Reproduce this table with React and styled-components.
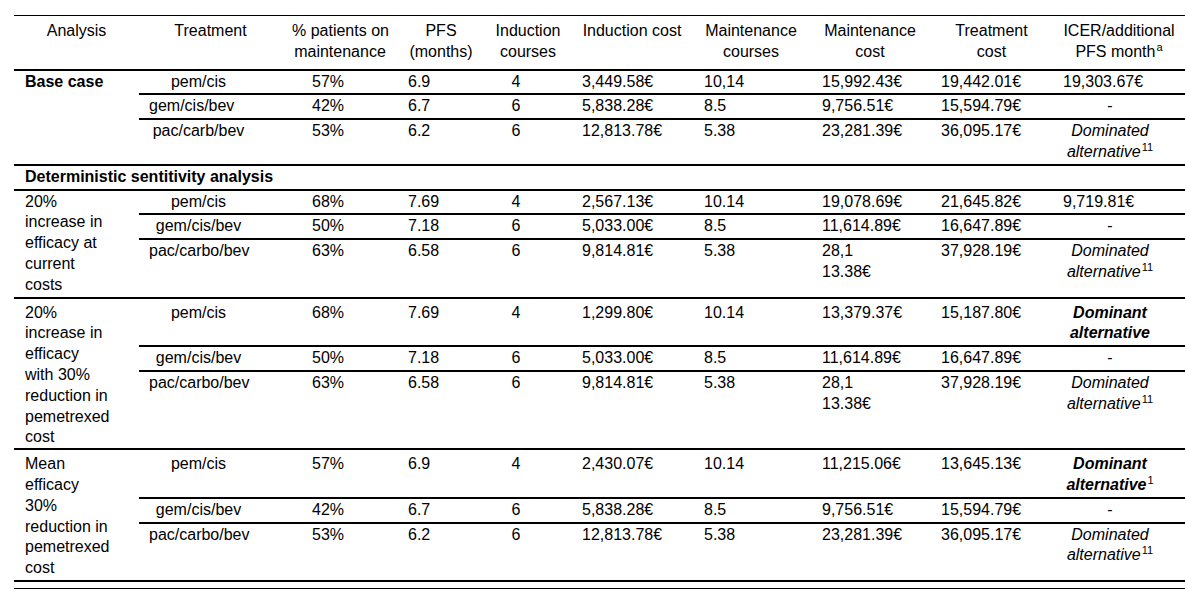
import React from 'react';
import styled, { createGlobalStyle } from 'styled-components';

const GlobalStyle = createGlobalStyle`
  html, body { margin: 0; padding: 0; background: #fff; }
  body { font-family: "Liberation Sans", Arial, sans-serif; color: #000; }
`;

const COLS = '125px 143px 116px 86px 88px 120px 118px 120px 123px 132px';
const BODY_COLS = '143px 116px 86px 88px 120px 118px 120px 123px 132px';

const Page = styled.div`
  padding: 15px 0 0 14px;
`;

const Table = styled.div`
  width: 1171px;
  border-top: 1px solid #000;
  font-size: 16px;
  line-height: 20.8px;
`;

const HeaderRow = styled.div`
  display: grid;
  grid-template-columns: ${COLS};
  border-bottom: 2px solid #000;
`;

const HeadCell = styled.div`
  padding: 5px 10px 6px;
  text-align: center;
  white-space: nowrap;
`;

const Group = styled.div`
  display: flex;
  border-bottom: 2px solid #000;
`;

const AnalysisCell = styled.div`
  flex: 0 0 125px;
  box-sizing: border-box;
  padding: ${p => p.$pt ?? 1}px 10px ${p => p.$pb ?? 1}px 11px;
  font-weight: ${p => (p.$bold ? 700 : 400)};
  white-space: nowrap;
`;

const Rows = styled.div`
  flex: 1;
  display: flex;
  flex-direction: column;
`;

const Row = styled.div`
  display: grid;
  grid-template-columns: ${BODY_COLS};
  &:not(:last-child) { border-bottom: 2px solid #000; }
  &:last-child { flex: 1; }
`;

const Cell = styled.div`
  padding: ${p => p.$pt ?? 1}px ${p => p.$pr ?? 10}px 1px ${p => p.$pl ?? 10}px;
  text-align: ${p => p.$align || 'left'};
  font-style: ${p => (p.$italic ? 'italic' : 'normal')};
  font-weight: ${p => (p.$bold ? 700 : 400)};
`;

const SectionRow = styled.div`
  padding: 1px 11px;
  font-weight: 700;
  border-bottom: 2px solid #000;
`;

const Sup = styled.sup`
  font-size: 11px;
  font-style: normal;
  font-weight: 400;
  line-height: 0;
  vertical-align: 0;
  position: relative;
  top: -6px;
  margin-left: 1px;
`;

const ClosingRule = styled.div`
  width: 1171px;
  margin-top: 6px;
  border-top: 1px solid #000;
`;

const headers = [
  ['Analysis'],
  ['Treatment'],
  ['% patients on', 'maintenance'],
  ['PFS', '(months)'],
  ['Induction', 'courses'],
  ['Induction cost'],
  ['Maintenance', 'courses'],
  ['Maintenance', 'cost'],
  ['Treatment', 'cost'],
];

const Lines = ({ lines }) =>
  lines.map((l, i) => (
    <React.Fragment key={i}>
      {i > 0 && <br />}
      {l}
    </React.Fragment>
  ));

const Icer = ({ v, pt }) => {
  if (v === '-') return <Cell $pt={pt} $align="center" $pr={28}>-</Cell>;
  if (v === 'dominated')
    return (
      <Cell $pt={pt} $align="center" $pr={28} $italic>
        Dominated alternative<Sup>11</Sup>
      </Cell>
    );
  if (v === 'dominant')
    return (
      <Cell $pt={pt} $align="center" $pr={28} $italic $bold>
        Dominant alternative
      </Cell>
    );
  if (v === 'dominant1')
    return (
      <Cell $pt={pt} $align="center" $pr={28} $italic $bold>
        Dominant alternative<Sup>1</Sup>
      </Cell>
    );
  return <Cell $pt={pt}>{v}</Cell>;
};

const DataRow = ({ r, pt, treatPr = 34 }) => (
  <Row>
    <Cell $pt={pt} $align="center" $pr={treatPr}>{r[0]}</Cell>
    <Cell $pt={pt} $align="center" $pr={34}>{r[1]}</Cell>
    <Cell $pt={pt}>{r[2]}</Cell>
    <Cell $pt={pt} $align="center" $pr={34}>{r[3]}</Cell>
    <Cell $pt={pt}>{r[4]}</Cell>
    <Cell $pt={pt} $pl={12}>{r[5]}</Cell>
    <Cell $pt={pt} $pl={12}><Lines lines={r[6]} /></Cell>
    <Cell $pt={pt} $pl={11}>{r[7]}</Cell>
    <Icer v={r[8]} pt={pt} />
  </Row>
);

const groups = [
  {
    label: ['Base case'],
    bold: true,
    rows: [
      ['pem/cis', '57%', '6.9', '4', '3,449.58€', '10,14', ['15,992.43€'], '19,442.01€', '19,303.67€'],
      ['gem/cis/bev', '42%', '6.7', '6', '5,838.28€', '8.5', ['9,756.51€'], '15,594.79€', '-', 50],
      ['pac/carb/bev', '53%', '6.2', '6', '12,813.78€', '5.38', ['23,281.39€'], '36,095.17€', 'dominated'],
    ],
  },
  {
    section: 'Deterministic sentitivity analysis',
  },
  {
    label: ['20%', 'increase in', 'efficacy at', 'current', 'costs'],
    rows: [
      ['pem/cis', '68%', '7.69', '4', '2,567.13€', '10.14', ['19,078.69€'], '21,645.82€', '9,719.81€'],
      ['gem/cis/bev', '50%', '7.18', '6', '5,033.00€', '8.5', ['11,614.89€'], '16,647.89€', '-'],
      ['pac/carbo/bev', '63%', '6.58', '6', '9,814.81€', '5.38', ['28,1', '13.38€'], '37,928.19€', 'dominated'],
    ],
  },
  {
    label: ['20%', 'increase in', 'efficacy', 'with 30%', 'reduction in', 'pemetrexed', 'cost'],
    pt: 4,
    pb: 0,
    rows: [
      ['pem/cis', '68%', '7.69', '4', '1,299.80€', '10.14', ['13,379.37€'], '15,187.80€', 'dominant'],
      ['gem/cis/bev', '50%', '7.18', '6', '5,033.00€', '8.5', ['11,614.89€'], '16,647.89€', '-'],
      ['pac/carbo/bev', '63%', '6.58', '6', '9,814.81€', '5.38', ['28,1', '13.38€'], '37,928.19€', 'dominated'],
    ],
  },
  {
    label: ['Mean', 'efficacy', '30%', 'reduction in', 'pemetrexed', 'cost'],
    pt: 4,
    rows: [
      ['pem/cis', '57%', '6.9', '4', '2,430.07€', '10.14', ['11,215.06€'], '13,645.13€', 'dominant1'],
      ['gem/cis/bev', '42%', '6.7', '6', '5,838.28€', '8.5', ['9,756.51€'], '15,594.79€', '-'],
      ['pac/carbo/bev', '53%', '6.2', '6', '12,813.78€', '5.38', ['23,281.39€'], '36,095.17€', 'dominated'],
    ],
  },
];

export default function App() {
  return (
    <Page>
      <GlobalStyle />
      <Table>
        <HeaderRow>
          {headers.map((h, i) => (
            <HeadCell key={i}>
              <Lines lines={h} />
            </HeadCell>
          ))}
          <HeadCell>
            ICER/additional
            <br />
            PFS month<Sup>a</Sup>
          </HeadCell>
        </HeaderRow>
        {groups.map((g, gi) =>
          g.section ? (
            <SectionRow key={gi}>{g.section}</SectionRow>
          ) : (
            <Group key={gi}>
              <AnalysisCell $bold={g.bold} $pt={g.pt} $pb={g.pb}>
                <Lines lines={g.label} />
              </AnalysisCell>
              <Rows>
                {g.rows.map((r, ri) => (
                  <DataRow
                    key={ri}
                    r={r}
                    pt={ri === 0 ? g.pt : undefined}
                    treatPr={r[9]}
                  />
                ))}
              </Rows>
            </Group>
          )
        )}
      </Table>
      <ClosingRule />
    </Page>
  );
}
